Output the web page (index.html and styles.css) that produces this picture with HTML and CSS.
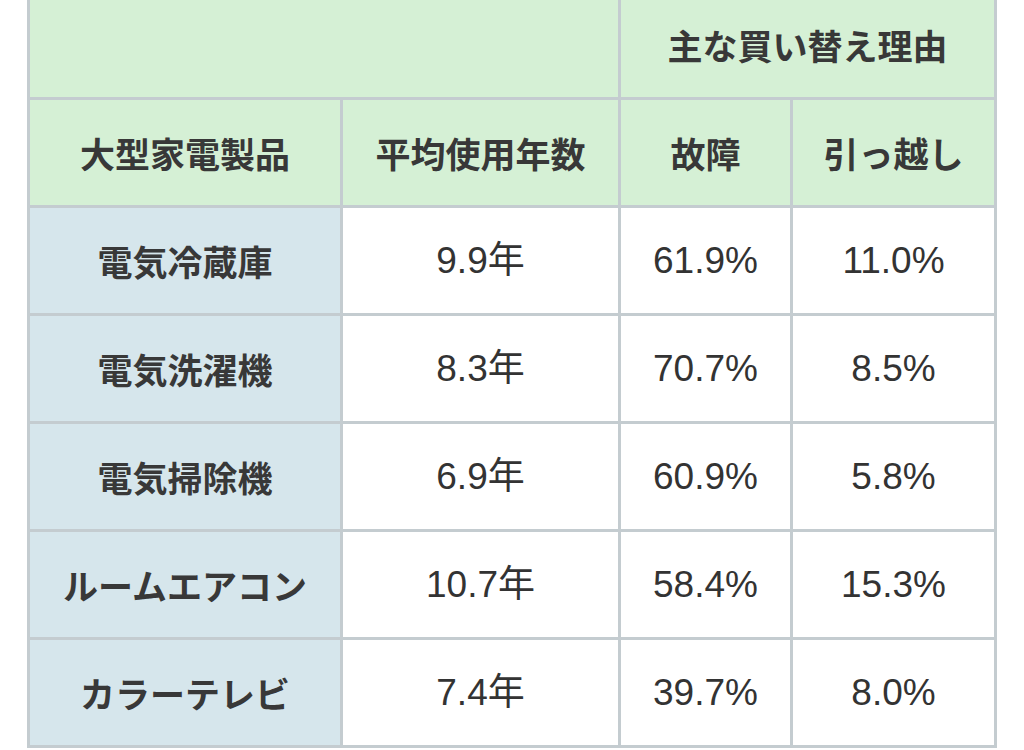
FILE: index.html
```html
<!DOCTYPE html>
<html lang="ja">
<head>
<meta charset="utf-8">
<title>大型家電製品の平均使用年数</title>
<link rel="stylesheet" href="styles.css">
</head>
<body>
<table class="stats">
  <colgroup>
    <col class="c1"><col class="c2"><col class="c3"><col class="c4">
  </colgroup>
  <thead>
    <tr>
      <th colspan="2" class="head"></th>
      <th colspan="2" class="head">主な買い替え理由</th>
    </tr>
    <tr>
      <th class="head">大型家電製品</th>
      <th class="head">平均使用年数</th>
      <th class="head">故障</th>
      <th class="head">引っ越し</th>
    </tr>
  </thead>
  <tbody>
    <tr><th class="label">電気冷蔵庫</th><td>9.9年</td><td>61.9%</td><td>11.0%</td></tr>
    <tr><th class="label">電気洗濯機</th><td>8.3年</td><td>70.7%</td><td>8.5%</td></tr>
    <tr><th class="label">電気掃除機</th><td>6.9年</td><td>60.9%</td><td>5.8%</td></tr>
    <tr><th class="label">ルームエアコン</th><td>10.7年</td><td>58.4%</td><td>15.3%</td></tr>
    <tr><th class="label">カラーテレビ</th><td>7.4年</td><td>39.7%</td><td>8.0%</td></tr>
  </tbody>
</table>
</body>
</html>
```

FILE: styles.css
```css
html, body {
  margin: 0;
  padding: 0;
  background: #ffffff;
}

body {
  overflow: hidden;
  font-family: "Liberation Sans", "Noto Sans CJK JP", sans-serif;
  color: #333333;
}

.stats {
  border-collapse: collapse;
  margin: -11px 0 0 27px;
  table-layout: fixed;
  width: 970px;
}

.c1 { width: 313px; }
.c2 { width: 278px; }
.c3 { width: 172px; }
.c4 { width: 204px; }

.stats th,
.stats td {
  border: 3px solid #c4ccd0;
  height: 105px;
  padding: 0;
  text-align: center;
  vertical-align: middle;
  font-size: 35px;
  line-height: 1;
}

.stats th {
  font-family: "Noto Sans CJK JP", sans-serif;
  font-weight: 700;
  color: #383838;
}

.stats .head {
  background: #d5f0d5;
}

.stats .label {
  background: #d6e6ec;
}

.stats td {
  background: #ffffff;
  font-size: 37px;
  font-weight: 400;
  color: #333333;
}
```
